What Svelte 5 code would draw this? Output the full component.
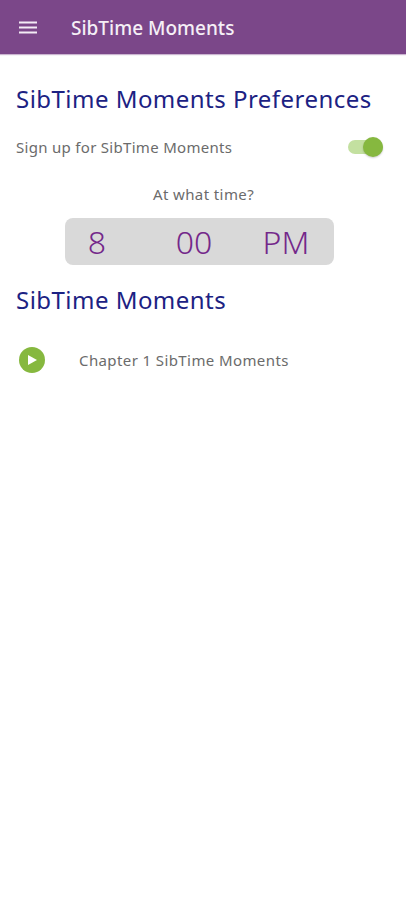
<script lang="ts">
	let enabled = true;
	const time = ['8', '00', 'PM'];
</script>

<div class="screen">
	<header class="toolbar">
		<button class="menu" aria-label="Menu">
			<svg width="18" height="14" viewBox="0 0 18 14">
				<path d="M0 2.5h18M0 7.5h18M0 12.5h18" stroke="#f3ecf5" stroke-width="2" fill="none" />
			</svg>
		</button>
		<span class="title">SibTime Moments</span>
	</header>

	<main class="content">
		<h1>SibTime Moments Preferences</h1>

		<div class="signup">
			<span>Sign up for SibTime Moments</span>
			<button class="switch" class:on={enabled} aria-label="Toggle" onclick={() => (enabled = !enabled)}>
				<span class="thumb"></span>
			</button>
		</div>

		<p class="ask">At what time?</p>

		<div class="picker">
			{#each time as part}
				<span>{part}</span>
			{/each}
		</div>

		<h2>SibTime Moments</h2>

		<div class="chapter">
			<svg class="play" width="26" height="26" viewBox="0 0 26 26">
				<circle cx="13" cy="13" r="13" fill="#86b83f" />
				<path d="M9 8 18 13 9 18Z" fill="#fff" />
			</svg>
			<span>Chapter 1 SibTime Moments</span>
		</div>
	</main>
</div>

<style>
	:global(body) {
		margin: 0;
		background: #fff;
	}

	.screen {
		width: 406px;
		height: 900px;
		font-family: 'Noto Sans', 'Open Sans', sans-serif;
		overflow: hidden;
	}

	.toolbar {
		height: 54px;
		background: #7b4789;
		display: flex;
		align-items: center;
		gap: 34px;
		padding-left: 19px;
		box-shadow: 0 1px 1px rgba(123, 71, 137, 0.4);
	}

	.menu {
		background: none;
		border: 0;
		padding: 0;
		display: flex;
	}

	.title {
		color: #f5eff6;
		font-size: 19px;
		font-weight: 500;
		padding-top: 2px;
	}

	.content {
		padding: 0 23px 0 16px;
	}

	h1,
	h2 {
		margin: 0;
		color: #1c2283;
		font-weight: 400;
		font-size: 24px;
		line-height: 32px;
		letter-spacing: 0.47px;
	}

	h1 {
		padding-top: 29px;
	}

	.signup {
		display: flex;
		justify-content: space-between;
		align-items: center;
		margin-top: 16px;
		height: 32px;
		color: #6b6b6b;
		font-size: 15px;
		letter-spacing: 0.3px;
	}

	.switch {
		position: relative;
		width: 35px;
		height: 14px;
		border: 0;
		border-radius: 7px;
		background: #c3e0a0;
		padding: 0;
	}

	.thumb {
		position: absolute;
		right: 0;
		top: -3px;
		width: 20px;
		height: 20px;
		border-radius: 50%;
		background: #86b83f;
		box-shadow: 0 1px 2px rgba(0, 0, 0, 0.2);
	}

	.ask {
		margin: 21px 0 0;
		text-align: center;
		color: #6b6b6b;
		font-size: 15px;
		line-height: 20px;
		letter-spacing: 0.4px;
		padding-left: 8px;
	}

	.picker {
		width: 269px;
		height: 47px;
		margin: 14px 0 0 49px;
		background: #d9d9d9;
		border-radius: 8px;
		display: grid;
		grid-template-columns: 64px 130px 54px;
		align-items: center;
		text-align: center;
		color: #74288a;
		font-size: 32px;
		font-weight: 300;
	}

	h2 {
		margin-top: 19px;
	}

	.chapter {
		display: flex;
		align-items: center;
		gap: 34px;
		margin-top: 31px;
		padding-left: 3px;
		color: #6b6b6b;
		font-size: 15px;
		letter-spacing: 0.4px;
	}
</style>
